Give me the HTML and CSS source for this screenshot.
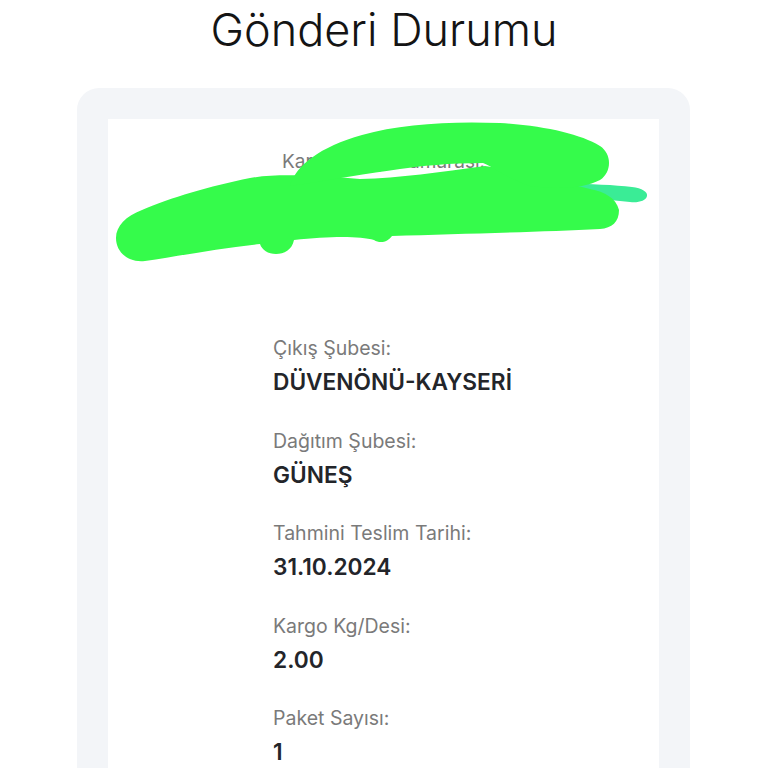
FILE: index.html
```html
<!DOCTYPE html>
<html lang="tr">
<head>
<meta charset="utf-8">
<title>Gönderi Durumu</title>
<link rel="stylesheet" href="styles.css">
</head>
<body>
<h1 class="title">Gönderi Durumu</h1>
<div class="card">
  <div class="inner">
    <div class="tracking">
      <div class="tracking-label">Kargo Takip Numarası:</div>
    </div>
    <div class="details">
      <div class="item">
        <div class="label">Çıkış Şubesi:</div>
        <div class="value">DÜVENÖNÜ-KAYSERİ</div>
      </div>
      <div class="item">
        <div class="label">Dağıtım Şubesi:</div>
        <div class="value">GÜNEŞ</div>
      </div>
      <div class="item">
        <div class="label">Tahmini Teslim Tarihi:</div>
        <div class="value">31.10.2024</div>
      </div>
      <div class="item">
        <div class="label">Kargo Kg/Desi:</div>
        <div class="value">2.00</div>
      </div>
      <div class="item">
        <div class="label">Paket Sayısı:</div>
        <div class="value">1</div>
      </div>
    </div>
  </div>
</div>
<svg class="scribble" width="768" height="300" viewBox="0 0 768 300" aria-hidden="true">
  <path fill="#3aec96" d="M565 183 C590 184 615 185 632 187 C642 188 648 192 647 196 C646 201 638 203 630 202 L590 198 L565 196 Z"/>
  <path fill="#35fb4b" d="M116 238 C116 226 126 216 142 210 C170 198 210 186 250 178 C280 173 320 176 360 179 C400 178 440 172 485 166 C520 170 560 182 590 189 C605 192 616 198 619 210 C619 222 612 228 600 229 C540 232 460 234 392 236 C388 242 380 244 374 240 C360 236 330 236 294 240 C292 250 284 254 276 254 C268 254 262 250 260 244 C220 248 180 256 145 261 C128 263 116 252 116 238 Z"/>
  <path fill="#35fb4b" d="M290 186 C296 165 320 147 362 135 C400 124 450 121 500 123 C545 126 580 134 600 146 C612 154 612 172 600 180 C585 188 560 190 530 186 C510 180 495 168 483 163 C450 163 420 166 400 169 C370 173 330 180 290 186 Z"/>
</svg>
</body>
</html>
```
FILE: styles.css
```css
html, body {
  margin: 0;
  padding: 0;
  background: #ffffff;
}
body {
  width: 768px;
  height: 768px;
  overflow: hidden;
  position: relative;
  font-family: "Inter", "Noto Sans", sans-serif;
}
.title {
  margin: 0;
  padding-top: 4px;
  text-align: center;
  font-size: 45px;
  line-height: 52px;
  font-weight: 300;
  color: #141414;
  letter-spacing: 0;
}
.card {
  margin: 32px 0 0 77px;
  width: 613px;
  box-sizing: border-box;
  border: 31px solid #f3f5f8;
  border-radius: 22px;
  background: #ffffff;
}
.inner {
  min-height: 700px;
}
.tracking {
  padding-top: 31px;
  height: 186px;
  text-align: center;
}
.tracking-label {
  font-size: 19px;
  line-height: 24px;
  color: #7a7a7a;
}
.details {
  padding-left: 165px;
}
.item {
  display: flex;
  flex-direction: column;
  gap: 8px;
  margin-bottom: 32.5px;
}
.label {
  font-size: 19.5px;
  line-height: 24px;
  color: #7a7a7a;
}
.value {
  font-size: 22.7px;
  line-height: 28px;
  font-weight: 600;
  color: #23252a;
}
.scribble {
  position: absolute;
  left: 0;
  top: 0;
}
```
